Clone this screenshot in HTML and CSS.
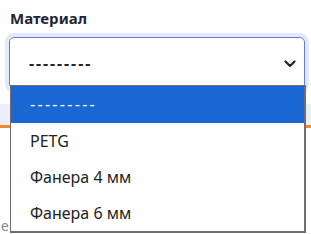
FILE: index.html
```html
<!DOCTYPE html>
<html lang="ru">
<head>
    <meta charset="UTF-8">
    <meta name="viewport" content="width=device-width, initial-scale=1.0">
    <title>Материал</title>
    <link rel="stylesheet" href="styles.css">
</head>
<body>
    <div class="page">
        <div class="field">
            <label class="field__label">Материал</label>
            <div class="select">
                <span class="select__value">---------</span>
                <svg class="select__arrow" width="12" height="8" viewBox="0 0 12 8">
                    <path d="M1.5 1.5 L6 6 L10.5 1.5" fill="none" stroke="#1e2636" stroke-width="2.2" stroke-linecap="round" stroke-linejoin="round"/>
                </svg>
            </div>
        </div>
        <div class="tabs"></div>
        <div class="note">е</div>

        <div class="options">
            <div class="option option--active">---------</div>
            <div class="option">PETG</div>
            <div class="option">Фанера 4 мм</div>
            <div class="option">Фанера 6 мм</div>
        </div>
    </div>
</body>
</html>
```

FILE: styles.css
```css
* {
    box-sizing: border-box;
}
body {
    margin: 0;
    background: #fff;
    font-family: "Noto Sans", "Open Sans", sans-serif;
    color: #1e2636;
}
.page {
    position: relative;
    width: 311px;
    height: 234px;
    overflow: hidden;
}
.field {
    padding: 8px 6px 0 9px;
}
.field__label {
    display: block;
    margin-left: 1px;
    font-size: 15px;
    font-weight: 700;
    line-height: 21px;
    color: #1e2636;
}
.select {
    display: flex;
    align-items: center;
    justify-content: space-between;
    margin-top: 8px;
    height: 52px;
    padding: 0 8px 0 19px;
    border: 1px solid #5b7fde;
    border-radius: 5px;
    box-shadow: 0 0 0 4px #e4e8f8;
}
.select__value {
    font-size: 16px;
    font-weight: 700;
    letter-spacing: 1.9px;
}
.select__arrow {
    margin-top: 1px;
}
.tabs {
    margin-top: 15px;
    height: 24px;
    background: #eceef9;
    border-bottom: 3px solid #f08a2c;
}
.note {
    margin-top: 90px;
    padding-left: 1px;
    font-size: 14px;
    line-height: 15px;
    color: #888;
}
.options {
    position: absolute;
    left: 10px;
    top: 85px;
    width: 296px;
    height: 148px;
    background: #fff;
    border: 1px solid #6e6e6e;
    border-right-width: 2px;
    border-bottom-width: 2px;
}
.option {
    height: 36px;
    padding-left: 19px;
    font-size: 16px;
    line-height: 36px;
    color: #222;
}
.option--active {
    height: 37px;
    line-height: 37px;
    background: #1967d2;
    color: #fff;
    letter-spacing: 2.3px;
}
```
